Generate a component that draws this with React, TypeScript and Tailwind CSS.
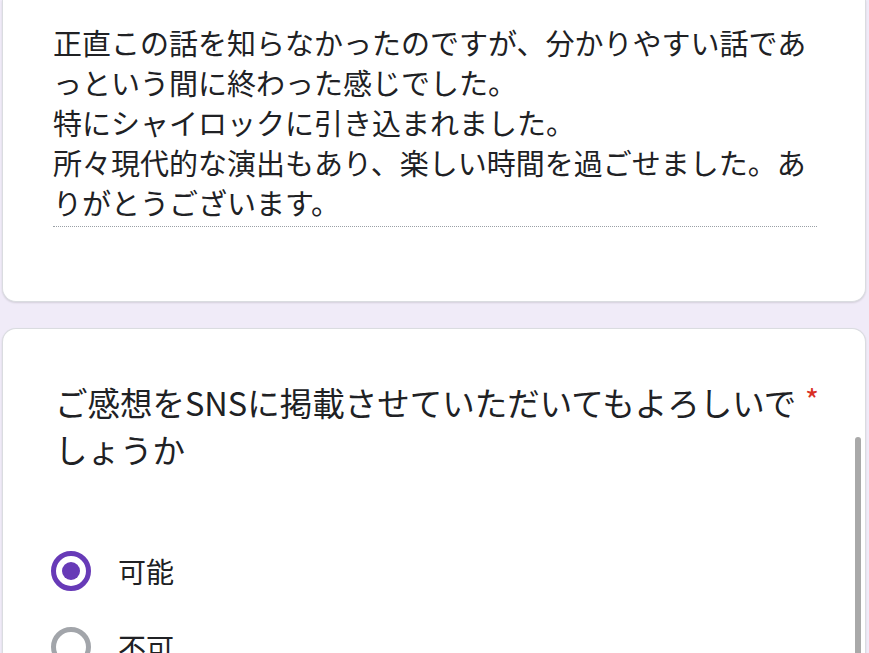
export default function App() {
  return (
    <div
      className="relative min-h-screen overflow-hidden bg-[#f0ebf8] pl-[2px] pr-[3px] text-[#202124]"
      style={{ fontFamily: '"Noto Sans CJK JP", "Noto Sans", sans-serif' }}
    >
      {/* 回答カード（上部は画面外） */}
      <div className="rounded-b-[14px] border border-t-0 border-[#dadce0] bg-white pb-[74px] pl-[50px] pr-[48px] pt-[22px] shadow-[0_1px_2px_rgba(0,0,0,0.12)]">
        <div className="border-b border-dotted border-[#9aa0a6] pb-[4px] text-[29px] leading-[40px]">
          正直この話を知らなかったのですが、分かりやすい話であっという間に終わった感じでした。
          <br />
          特にシャイロックに引き込まれました。
          <br />
          所々現代的な演出もあり、楽しい時間を過ごせました。ありがとうございます。
        </div>
      </div>

      {/* 質問カード */}
      <div className="mt-[26px] min-h-[400px] rounded-t-[14px] border border-b-0 border-[#dadce0] bg-white pl-[52px] pr-[40px] pt-[49px] shadow-[0_1px_2px_rgba(0,0,0,0.12)]">
        <div className="flex items-start">
          <div className="w-[746px] text-[32.5px] leading-[47px]">
            ご感想をSNSに掲載させていただいてもよろしいでしょうか
          </div>
          <span className="ml-[4px] mt-[4px] text-[30px] leading-[34px] text-[#d93025]">*</span>
        </div>

        <div className="mt-[79px] flex flex-col gap-[36px]">
          <label className="-ml-[4px] flex items-center gap-[27px]">
            <span className="flex h-[40px] w-[40px] items-center justify-center rounded-full border-[5px] border-[#673ab7]">
              <span className="h-[18px] w-[18px] rounded-full bg-[#673ab7]" />
            </span>
            <span className="text-[28px] leading-[40px]">可能</span>
          </label>
          <label className="-ml-[4px] flex items-center gap-[27px]">
            <span className="h-[40px] w-[40px] rounded-full border-[5px] border-[#a2a5aa]" />
            <span className="text-[28px] leading-[40px]">不可</span>
          </label>
        </div>
      </div>

      {/* スクロールバー */}
      <div className="absolute left-[855px] top-[437px] h-[240px] w-[6px] rounded-full bg-[#a9a9a9]" />
    </div>
  );
}
